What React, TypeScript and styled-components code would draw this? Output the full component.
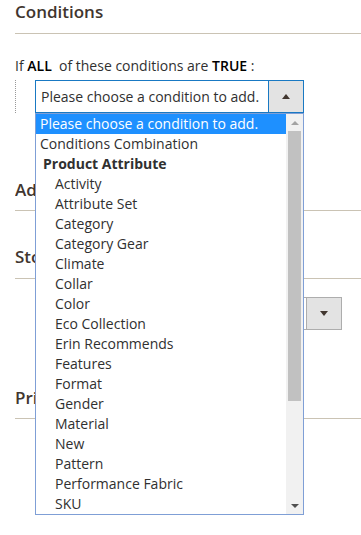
import React from "react";
import styled, { createGlobalStyle } from "styled-components";

const GlobalStyle = createGlobalStyle`
  html, body {
    margin: 0;
    padding: 0;
    background: #ffffff;
  }
  body {
    font-family: "Open Sans", "Liberation Sans", sans-serif;
    font-size: 14px;
    color: #303030;
  }
`;

const Page = styled.div`
  width: 361px;
  height: 535px;
  overflow: hidden;
  padding-left: 15px;
  box-sizing: border-box;
`;

const Section = styled.div<{ $gap: number }>`
  margin-top: ${(p) => p.$gap}px;
`;

const Legend = styled.div<{ $pad: number }>`
  font-size: 17px;
  font-weight: 600;
  line-height: 24px;
  color: #41362f;
  padding-bottom: ${(p) => p.$pad}px;
  border-bottom: 1px solid #cac3b4;
  white-space: nowrap;
  overflow: hidden;
`;

const RuleText = styled.div`
  margin-top: 22px;
  line-height: 20px;
  color: #303030;

  b {
    font-weight: 600;
    color: #000000;
  }
`;

const ConditionRow = styled.div`
  margin-top: 4px;
  padding-left: 19px;
  border-left: 1px dotted #999999;
  position: relative;
  z-index: 2;
`;

const SelectWrap = styled.div`
  position: relative;
  width: 269px;
`;

const SelectBox = styled.div<{ $focus?: boolean; $width: number }>`
  display: flex;
  width: ${(p) => p.$width}px;
  height: 33px;
  box-sizing: border-box;
  border: 1px solid ${(p) => (p.$focus ? "#1979c3" : "#adadad")};
  background: #ffffff;
`;

const SelectValue = styled.div`
  flex: 1;
  padding-left: 5px;
  line-height: 31px;
  white-space: nowrap;
  overflow: hidden;
`;

const SelectButton = styled.div<{ $focus?: boolean; $up?: boolean }>`
  width: 34px;
  display: flex;
  align-items: center;
  justify-content: center;
  background: #e3e3e3;
  border-left: 1px solid ${(p) => (p.$focus ? "#1979c3" : "#adadad")};

  &::after {
    content: "";
    width: 0;
    height: 0;
    border-left: 4px solid transparent;
    border-right: 4px solid transparent;
    ${(p) =>
      p.$up
        ? "border-bottom: 5px solid #41362f;"
        : "border-top: 5px solid #41362f;"}
  }
`;

const Dropdown = styled.div`
  position: absolute;
  left: 0;
  top: 33px;
  width: 269px;
  height: 402px;
  box-sizing: border-box;
  border: 1px solid #7f9fd6;
  background: #ffffff;
  display: flex;
`;

const OptionList = styled.div`
  flex: 1;
  overflow: hidden;
`;

const Option = styled.div<{ $level: number; $active?: boolean; $group?: boolean }>`
  height: 20px;
  line-height: 20px;
  white-space: nowrap;
  padding-left: ${(p) => (p.$group ? 7 : p.$level === 1 ? 19 : 4)}px;
  font-weight: ${(p) => (p.$group ? 700 : 400)};
  color: ${(p) => (p.$active ? "#ffffff" : "#303030")};
  background: ${(p) => (p.$active ? "#1e90ff" : "transparent")};
`;

const ScrollBar = styled.div`
  width: 17px;
  background: #f1f1f1;
  display: flex;
  flex-direction: column;
`;

const ScrollArrow = styled.div<{ $up?: boolean }>`
  height: 17px;
  display: flex;
  align-items: center;
  justify-content: center;

  &::after {
    content: "";
    width: 0;
    height: 0;
    border-left: 4px solid transparent;
    border-right: 4px solid transparent;
    ${(p) =>
      p.$up
        ? "border-bottom: 4px solid #a3a3a3;"
        : "border-top: 4px solid #505050;"}
  }
`;

const ScrollTrack = styled.div`
  flex: 1;
  padding: 0 2px;
`;

const ScrollThumb = styled.div`
  height: 270px;
  background: #c1c1c1;
`;

const StoreSelect = styled.div`
  margin-top: 18px;
  margin-left: 127px;
`;

const attributes = [
  "Activity",
  "Attribute Set",
  "Category",
  "Category Gear",
  "Climate",
  "Collar",
  "Color",
  "Eco Collection",
  "Erin Recommends",
  "Features",
  "Format",
  "Gender",
  "Material",
  "New",
  "Pattern",
  "Performance Fabric",
  "SKU",
];

const App = (): React.ReactElement => {
  return (
    <Page>
      <GlobalStyle />
      <Legend $pad={9}>Conditions</Legend>
      <RuleText>
        If <b>ALL</b>&nbsp; of these conditions are <b>TRUE</b> :
      </RuleText>
      <ConditionRow>
        <SelectWrap>
          <SelectBox $focus $width={269}>
            <SelectValue>Please choose a condition to add.</SelectValue>
            <SelectButton $focus $up />
          </SelectBox>
          <Dropdown>
            <OptionList>
              <Option $level={0} $active>
                Please choose a condition to add.
              </Option>
              <Option $level={0}>Conditions Combination</Option>
              <Option $level={0} $group>
                Product Attribute
              </Option>
              {attributes.map((name) => (
                <Option key={name} $level={1}>
                  {name}
                </Option>
              ))}
            </OptionList>
            <ScrollBar>
              <ScrollArrow $up />
              <ScrollTrack>
                <ScrollThumb />
              </ScrollTrack>
              <ScrollArrow />
            </ScrollBar>
          </Dropdown>
        </SelectWrap>
      </ConditionRow>

      <Section $gap={65}>
        <Legend $pad={8}>Advanced Settings</Legend>
      </Section>

      <Section $gap={34}>
        <Legend $pad={9}>Store Settings</Legend>
        <StoreSelect>
          <SelectBox $width={200}>
            <SelectValue>Default Store View</SelectValue>
            <SelectButton />
          </SelectBox>
        </StoreSelect>
      </Section>

      <Section $gap={56}>
        <Legend $pad={8}>Price Settings</Legend>
      </Section>
    </Page>
  );
};

export default App;
